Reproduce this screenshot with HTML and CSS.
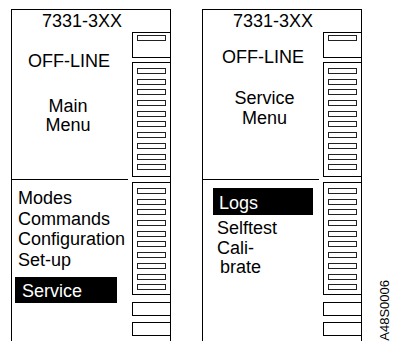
FILE: index.html
```html
<!DOCTYPE html>
<html>
<head>
<meta charset="utf-8">
<link rel="stylesheet" href="styles.css">
</head>
<body>
<div class="figure">
  <div class="panel">
    <div class="display">
      <div class="screen">
        <div class="model">7331-3XX</div>
        <div class="status">OFF-LINE</div>
        <div class="menu-name">Main<br>Menu</div>
      </div>
      <div class="options">
        <div class="opt">Modes</div>
        <div class="opt">Commands</div>
        <div class="opt">Configuration</div>
        <div class="opt">Set-up</div>
        <div class="opt sel sel-main">Service</div>
      </div>
    </div>
    <div class="keys">
      <div class="box box-a"><span class="slot"></span></div>
      <div class="box box-b"><span class="slot"></span><span class="slot"></span><span class="slot"></span><span class="slot"></span><span class="slot"></span><span class="slot"></span><span class="slot"></span><span class="slot"></span><span class="slot"></span><span class="slot"></span></div>
      <div class="box box-c"><span class="slot"></span><span class="slot"></span><span class="slot"></span><span class="slot"></span><span class="slot"></span><span class="slot"></span><span class="slot"></span><span class="slot"></span><span class="slot"></span><span class="slot"></span></div>
      <div class="box box-d"></div>
      <div class="box box-e"></div>
    </div>
  </div>

  <div class="panel">
    <div class="display">
      <div class="screen">
        <div class="model">7331-3XX</div>
        <div class="status status-b">OFF-LINE</div>
        <div class="menu-name menu-name-b">Service<br>Menu</div>
      </div>
      <div class="options options-b">
        <div class="opt sel sel-svc">Logs</div>
        <div class="opt">Selftest</div>
        <div class="opt">Cali-</div>
        <div class="opt indent">brate</div>
      </div>
    </div>
    <div class="keys">
      <div class="box box-a"><span class="slot"></span></div>
      <div class="box box-b"><span class="slot"></span><span class="slot"></span><span class="slot"></span><span class="slot"></span><span class="slot"></span><span class="slot"></span><span class="slot"></span><span class="slot"></span><span class="slot"></span><span class="slot"></span></div>
      <div class="box box-c"><span class="slot"></span><span class="slot"></span><span class="slot"></span><span class="slot"></span><span class="slot"></span><span class="slot"></span><span class="slot"></span><span class="slot"></span><span class="slot"></span><span class="slot"></span></div>
      <div class="box box-d"></div>
      <div class="box box-e"></div>
    </div>
  </div>

  <div class="figure-id">A48S0006</div>
</div>
</body>
</html>
```

FILE: styles.css
```css
html, body {
  margin: 0;
  padding: 0;
  background: #fff;
}

body {
  width: 393px;
  height: 341px;
  overflow: hidden;
  font-family: "Liberation Sans", Arial, sans-serif;
  color: #000;
}

.figure {
  position: relative;
  display: flex;
  gap: 31px;
  padding: 9px 0 0 11px;
  height: 341px;
  box-sizing: border-box;
  overflow: hidden;
}

.panel {
  width: 158px;
  border: 1px solid #000;
  border-bottom: none;
  display: grid;
  grid-template-columns: 120px 38px;
}

.display {
  display: flex;
  flex-direction: column;
}

.screen {
  height: 169px;
  width: 116px;
  border-bottom: 1px solid #000;
}

.model {
  font-size: 18px;
  line-height: 20px;
  padding: 1px 0 0 30px;
}

.status {
  font-size: 18px;
  line-height: 20px;
  margin-top: 20px;
  padding-left: 16px;
}

.status-b {
  margin-top: 16px;
  padding-left: 19px;
}

.menu-name {
  font-size: 18px;
  line-height: 19px;
  margin-top: 26px;
  text-align: center;
  padding-right: 4px;
}

.menu-name-b {
  line-height: 20px;
  margin-top: 21px;
  padding: 0 0 0 7px;
}

.options {
  padding-top: 8px;
  font-size: 18px;
  line-height: 20.5px;
  padding-left: 6px;
}

.opt {
  white-space: nowrap;
}

.sel {
  background: #000;
  color: #fff;
}

.sel-main {
  width: 95px;
  margin: 7px 0 0 -3px;
  padding: 4px 0 2px 7px;
  line-height: 20px;
}

.options-b {
  padding-left: 14px;
  line-height: 19.5px;
}

.sel-svc {
  width: 94px;
  margin: 0 0 4px -4px;
  padding: 5px 0 2px 6px;
  line-height: 20px;
}

.indent {
  padding-left: 3px;
}

.keys {
  display: flex;
  flex-direction: column;
}

.box {
  border: 1px solid #000;
  border-right: none;
  box-sizing: border-box;
  display: flex;
  flex-direction: column;
  flex-shrink: 0;
  padding-left: 4px;
}

.slot {
  display: block;
  width: 29px;
  height: 6px;
  box-sizing: border-box;
  border: 1px solid #222;
}

.box-a {
  margin-top: 22px;
  height: 26px;
  padding-top: 2px;
}

.box-b {
  margin-top: 4px;
  height: 115px;
  padding-top: 5px;
  gap: 4.7px;
}

.box-c {
  margin-top: 5px;
  height: 113px;
  padding-top: 5px;
  gap: 4.7px;
}

.box-d {
  margin-top: 7px;
  height: 14px;
}

.box-e {
  margin-top: 6px;
  height: 14px;
}

.figure-id {
  position: absolute;
  left: 378px;
  top: 280px;
  writing-mode: vertical-rl;
  transform: rotate(180deg);
  font-size: 13px;
  line-height: 14px;
  white-space: nowrap;
}
```
